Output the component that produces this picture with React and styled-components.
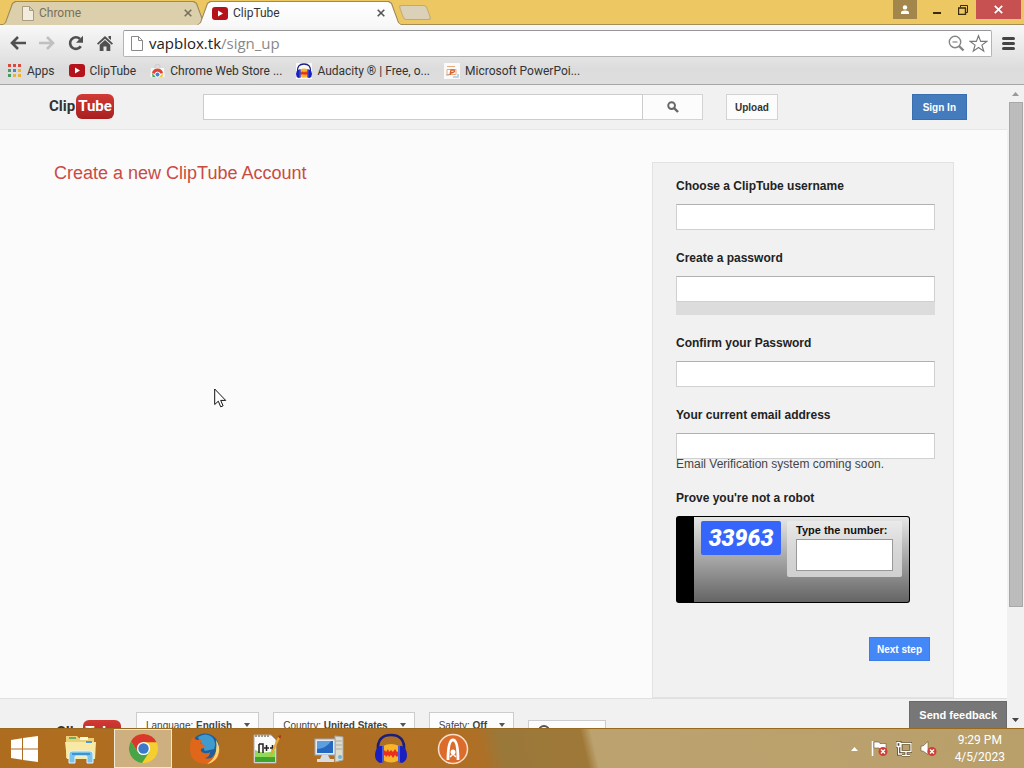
import React from "react";
import styled, { createGlobalStyle, css } from "styled-components";

const uiFont = `Roboto, "Open Sans", sans-serif`;
const pageFont = `"Liberation Sans", Arial, sans-serif`;

const GlobalStyle = createGlobalStyle`
  * {
    box-sizing: border-box;
  }
  body {
    margin: 0;
    font-family: ${pageFont};
    font-size: 12px;
    color: #333;
  }
  button, input {
    font-family: inherit;
    margin: 0;
  }
  svg {
    display: block;
    flex: none;
  }
`;

const Desktop = styled.div`
  display: flex;
  flex-direction: column;
  height: 100vh;
  overflow: hidden;
`;

/* ---------- browser window ---------- */

const TitleBar = styled.div`
  display: flex;
  flex: none;
  height: 25px;
  padding-left: 2px;
  background: #edc862;
  border-bottom: 1px solid #a38d58;
  font-family: ${uiFont};
`;

const Tabs = styled.div`
  display: flex;
  height: 25px;
  padding-top: 1px;
`;

const Tab = styled.div`
  position: relative;
  display: flex;
  align-items: center;
  width: 205px;
  margin-right: -10px;
  padding: 0 15px 0 20px;
  background: #9c8a5e;
  clip-path: polygon(0 100%, 3px 90%, 10px 8%, 13px 0, 192px 0, 195px 8%, 202px 90%, 100% 100%);
  color: #77705e;
  z-index: ${(props) => (props.$active ? 1 : 0)};

  &::before {
    content: "";
    position: absolute;
    inset: 1px 1px 0 1px;
    background: ${(props) => (props.$active ? "linear-gradient(#ffffff, #f8f8f8)" : "#dccfac")};
    clip-path: polygon(0 100%, 3px 90%, 10px 8%, 13px 0, 190px 0, 193px 8%, 200px 90%, 100% 100%);
  }

  > * {
    position: relative;
  }

  ${(props) =>
    props.$active &&
    css`
      padding: 0 17px 0 15px;
      color: #333;
    `}
`;

const TabTitle = styled.span`
  flex: 1;
  margin-left: 5px;
  font-size: 12px;
  line-height: 16px;
`;

const IconButton = styled.button`
  display: flex;
  align-items: center;
  justify-content: center;
  padding: 0;
  border: 0;
  background: none;
  color: inherit;
`;

const NewTab = styled(IconButton)`
  width: 28px;
  height: 15px;
  margin: 5px 0 0 9px;
  border: 1px solid #c0aa70;
  border-radius: 3px;
  background: #dad1b8;
  transform: skewX(20deg);
`;

const WindowControls = styled.div`
  display: flex;
  margin-left: auto;
  padding-right: 3px;
`;

const UserButton = styled(IconButton)`
  width: 24px;
  height: 19px;
  margin-right: 7px;
  background: #a3864b;
`;

const WindowButton = styled(IconButton)`
  width: 26px;
  height: 20px;
`;

const CloseWindow = styled(IconButton)`
  width: 45px;
  height: 19px;
  background: #c75050;
`;

const Toolbar = styled.div`
  flex: none;
  height: 60px;
  background: linear-gradient(#f8f8f8, #dcdcdc 75%, #dedede);
  border-bottom: 1px solid #a6a6a6;
  font-family: ${uiFont};
`;

const NavRow = styled.div`
  display: flex;
  align-items: center;
  height: 32px;
  padding: 4px 9px 0 3px;
`;

const NavButton = styled(IconButton)`
  width: 29px;
  height: 24px;
`;

const Omnibox = styled.div`
  display: flex;
  flex: 1;
  align-items: center;
  gap: 4px;
  height: 27px;
  margin: 0 10px 0 4px;
  padding: 0 3px 0 7px;
  border: 1px solid #b4b4b4;
  border-top-color: #969696;
  border-radius: 2px;
  background: #fff;
`;

const Address = styled.div`
  flex: 1;
  margin-left: 2px;
  font-family: "Open Sans", "Noto Sans", sans-serif;
  font-size: 15px;
  line-height: 20px;
  color: #888;

  b {
    font-weight: 400;
    color: #222;
  }
`;

const BookmarkBar = styled.nav`
  display: flex;
  gap: 14px;
  height: 27px;
  padding-left: 8px;
`;

const Bookmark = styled.a`
  display: flex;
  align-items: center;
  gap: 5px;
  color: #333;
  font-size: 12px;
  text-decoration: none;
  white-space: nowrap;
`;

/* ---------- page ---------- */

const Viewport = styled.div`
  display: flex;
  flex: 1;
  min-height: 0;
  background: #fbfbfb;
`;

const Page = styled.div`
  position: relative;
  flex: 1;
  overflow: hidden;
`;

const Header = styled.header`
  display: flex;
  align-items: flex-start;
  height: 45px;
  padding: 9px 40px 0 49px;
  background: #f1f1f1;
  border-bottom: 1px solid #e6e6e6;
`;

const LogoLink = styled.a`
  display: flex;
  flex: none;
  align-items: center;
  justify-content: space-between;
  width: 65px;
  color: #333;
  font: 700 15px/25px Roboto, "Liberation Sans", sans-serif;
  text-decoration: none;

  span {
    width: 38px;
    border-radius: 6px;
    background: linear-gradient(#d23a35, #a81f20);
    color: #fff;
    text-align: center;
  }
`;

const Search = styled.form`
  display: flex;
  flex: 0 1 500px;
  height: 26px;
  margin-left: 89px;
`;

const SearchInput = styled.input`
  flex: 1;
  min-width: 0;
  border: 1px solid #ccc;
  background: #fff;
`;

const PlainButton = styled.button`
  height: 26px;
  padding: 0 8px;
  border: 1px solid #d3d3d3;
  background: #fcfcfc;
  color: #333;
  font-size: 10px;
  font-weight: 700;
`;

const SearchButton = styled(PlainButton)`
  display: flex;
  align-items: center;
  justify-content: center;
  width: 60px;
  border-left: 0;
`;

const UploadButton = styled(PlainButton)`
  margin-left: 23px;
`;

const SignInButton = styled(PlainButton)`
  margin-left: auto;
  padding: 0 10px;
  border-color: #3b6eb0;
  background: #447bbd;
  color: #fff;
`;

const Main = styled.main`
  display: flex;
  align-items: flex-start;
  justify-content: space-between;
  padding: 32px 53px 0 54px;
`;

const Heading = styled.h1`
  margin: 0;
  color: #ca4a42;
  font-size: 18px;
  font-weight: 400;
  line-height: 22px;
`;

const SignUpForm = styled.form`
  flex: none;
  width: 302px;
  padding: 15px 18px 36px 23px;
  border: 1px solid #e2e2e2;
  background: #f1f1f1;
`;

const Field = styled.div`
  display: flex;
  flex-direction: column;
  margin-bottom: 20px;
`;

const Label = styled.label`
  margin-bottom: 10px;
  color: #222;
  font-weight: 700;
  line-height: 16px;
`;

const TextInput = styled.input`
  height: 26px;
  padding: 0 8px;
  border: 1px solid #d0d0d0;
  border-top-color: #b0b0b0;
  background: #fff;
`;

const StrengthBar = styled.div`
  height: 13px;
  background: #dcdcdc;
`;

const Hint = styled.p`
  margin: 0;
  color: #444;
  line-height: 11px;
`;

const Captcha = styled.div`
  display: flex;
  align-items: flex-start;
  gap: 6px;
  width: 234px;
  height: 87px;
  padding: 4px 7px;
  border: 1px solid #000;
  border-left-width: 18px;
  border-radius: 3px;
  background: linear-gradient(#e6e6e6, #646464);
`;

const CaptchaCode = styled.div`
  width: 80px;
  height: 34px;
  border-radius: 2px;
  background: #3565fb;
  color: #fff;
  font: italic 900 23px/35px Roboto, "Liberation Sans", sans-serif;
  text-align: center;
`;

const CaptchaAnswer = styled.div`
  display: flex;
  flex: 1;
  flex-direction: column;
  height: 56px;
  padding: 2px 9px 6px;
  border-radius: 2px;
  background: linear-gradient(rgba(255, 255, 255, 0.35), rgba(255, 255, 255, 0.6));
`;

const CaptchaLabel = styled.label`
  color: #111;
  font-size: 11px;
  font-weight: 700;
  line-height: 15px;
  white-space: nowrap;
`;

const CaptchaInput = styled(TextInput)`
  width: 97px;
  height: 32px;
  margin-top: 1px;
  border-color: #999;
`;

const FormActions = styled.div`
  display: flex;
  justify-content: flex-end;
  padding: 14px 5px 0 0;
`;

const SubmitButton = styled(PlainButton)`
  height: 24px;
  padding: 0 7px;
  border-color: #3b7de8;
  background: #4488f8;
  color: #fff;
`;

const Footer = styled.footer`
  display: flex;
  align-items: flex-start;
  padding: 13px 56px 40px;
  border-top: 1px solid #e0e0e0;
  background: #f1f1f1;

  ${LogoLink} {
    padding-top: 8px;
  }
`;

const FooterButtons = styled.div`
  display: flex;
  align-items: flex-end;
  gap: 14px;
  margin-left: 15px;
`;

const Picker = styled.button`
  display: flex;
  align-items: center;
  gap: 12px;
  height: 28px;
  padding: 0 8px 2px 9px;
  border: 1px solid #ccc;
  background: #fcfcfc;
  color: #444;
  font-size: 10px;
  white-space: nowrap;
`;

const HistoryButton = styled(Picker)`
  width: 78px;
  height: 20px;
`;

const Caret = styled.i`
  border: 3px solid transparent;
  border-top: 4px solid #555;
  border-bottom: 0;
`;

const Feedback = styled.button`
  position: absolute;
  right: 0;
  bottom: 0;
  height: 27px;
  padding: 0 9px;
  border: 1px solid #6a6a6a;
  border-bottom: 0;
  background: #777;
  color: #fff;
  font-size: 11px;
  font-weight: 700;
`;

const Scrollbar = styled.div`
  display: flex;
  flex: none;
  flex-direction: column;
  align-items: center;
  width: 17px;
  background: #f1f1f1;
`;

const ScrollArrow = styled(IconButton)`
  flex: none;
  width: 17px;
  height: 17px;
`;

const Track = styled.div`
  flex: 1;
  width: 14px;
`;

const Thumb = styled.div`
  height: 83%;
  border: 1px solid #a8a8a8;
  background: #bcbcbc;
`;

/* ---------- taskbar ---------- */

const Taskbar = styled.div`
  display: flex;
  flex: none;
  height: 40px;
  border-top: 1px solid #98691f;
  background: linear-gradient(77deg, #ae6d1e, #ae7026 47%, #9a783a 49%, #9f7838 57%, #bba26e 58%, #b9a06b);
  font-family: ${uiFont};
`;

const StartButton = styled(IconButton)`
  width: 48px;
  margin-right: 2px;
`;

const TaskButton = styled(IconButton)`
  width: 58px;
  margin: 0 2px;
  border: 1px solid ${(props) => (props.$active ? "#f3e8d3" : "transparent")};
  background: ${(props) => (props.$active ? "#cdaf80" : "none")};
`;

const Tray = styled.div`
  display: flex;
  align-items: center;
  gap: 8px;
  margin-left: auto;
  padding-right: 19px;
`;

const HiddenIcons = styled(IconButton)`
  margin-right: 5px;
`;

const Clock = styled.time`
  margin-left: 10px;
  color: #fff;
  font-size: 12px;
  line-height: 17px;
  text-align: center;
`;

const Pointer = styled.svg`
  position: absolute;
  left: 214px;
  top: 303px;
`;

/* ---------- icons ---------- */

const FileIcon = ({ stroke = "#888" }) => (
  <svg width="12" height="15" viewBox="0 0 12 15" fill="#fff" fillOpacity="0.6" stroke={stroke}>
    <path d="M.5.5h7l4 4v10H.5zM7.5.5v4h4" />
  </svg>
);

const PlayIcon = () => (
  <svg width="16" height="13" viewBox="0 0 16 13">
    <rect y="0" width="16" height="13" rx="3" fill="#b5131b" />
    <path d="M6 3.5v6l5-3z" fill="#fff" />
  </svg>
);

const CrossIcon = ({ size = 8, stroke = "#555", width = 1.6 }) => (
  <svg width={size} height={size} viewBox="0 0 8 8" stroke={stroke} strokeWidth={width}>
    <path d="M.7.7l6.6 6.6M7.3.7L.7 7.3" />
  </svg>
);

const ArrowIcon = ({ color, flip }) => (
  <svg width="16" height="14" viewBox="0 0 16 14" fill="none" stroke={color} strokeWidth="2.6">
    <path d={flip ? "M0 7h14M8 1l6 6-6 6" : "M16 7H2M8 1L2 7l6 6"} />
  </svg>
);

const ReloadIcon = () => (
  <svg width="16" height="16" viewBox="0 0 16 16">
    <path d="M12.8 11.2A5.8 5.8 0 1 1 12 4" fill="none" stroke="#505050" strokeWidth="2.6" />
    <path d="M15 .8v7H8z" fill="#505050" />
  </svg>
);

const HomeIcon = () => (
  <svg width="16" height="15" viewBox="0 0 16 15" fill="#505050">
    <path d="M8 0l8 7.5-1.2 1.3L8 2.7 1.2 8.8 0 7.5zM11.5 0H14v4l-2.5-2z" />
    <path d="M8 4l5.3 4.8V15H9.5v-4.5h-3V15H2.7V8.8z" />
  </svg>
);

const ZoomIcon = () => (
  <svg width="17" height="17" viewBox="0 0 17 17" fill="none" stroke="#858585">
    <circle cx="7" cy="7" r="5.7" strokeWidth="1.4" />
    <path d="M4.5 7h5" strokeWidth="1.2" />
    <path d="M11 11l4.500 4.500" strokeWidth="2.4" />
  </svg>
);

const StarIcon = () => (
  <svg width="19" height="19" viewBox="0 0 20 19" fill="#fff" stroke="#777" strokeWidth="1.2">
    <path d="M10 1.300l2.300 6h6.400l-5.100 3.900 1.900 6.300-5.500-3.800-5.500 3.800 1.900-6.300-5.100-3.900h6.400z" />
  </svg>
);

const MenuIcon = () => (
  <svg width="13" height="13" viewBox="0 0 13 13" stroke="#444" strokeWidth="3" strokeLinecap="round">
    <path d="M1.500 1.500h10M1.500 6.500h10M1.500 11.500h10" />
  </svg>
);

const AppsIcon = () => {
  const colors = ["#d84a3f", "#d84a3f", "#d84a3f", "#4b9b5f", "#4a82d8", "#e8b33b", "#4b9b5f", "#e8b33b", "#e8b33b"];
  return (
    <svg width="14" height="14" viewBox="0 0 14 14">
      {colors.map((color, i) => (
        <rect key={i} x={(i % 3) * 5} y={Math.floor(i / 3) * 5} width="3" height="3" fill={color} />
      ))}
    </svg>
  );
};

const StoreIcon = () => (
  <svg width="15" height="16" viewBox="0 0 15 16">
    <path d="M5 5V3q0-1.500 2.500-1.500T10 3v2" fill="none" stroke="#ccc" />
    <path d="M1 5h13l.7 9H.3z" fill="#f7f7f7" />
    <path d="M2 10a5.600 5.600 0 0 1 11 0l-4 1H5z" fill="#dc4638" />
    <path d="M2 10l4 4H2.500z" fill="#4aa45c" />
    <path d="M13 10l-4 4h3.500z" fill="#f2c63f" />
    <circle cx="7.5" cy="11.6" r="2.5" fill="#4a83d4" stroke="#fff" />
  </svg>
);

const AudacityIcon = ({ size = 16 }) => (
  <svg width={size} height={size} viewBox="0 0 32 32">
    {size < 20 && <rect width="32" height="32" fill="#f8f8f8" />}
    <path d="M8 13q8-4 16 0v14q-8 5-16 0z" fill="#f9b52a" />
    <path d="M8 19l2-2 1 2 2-3 1 3 2-2 2 2 2-3 2 3 2-1v4l-2 2-2-2-2 3-2-3-2 2-1-2-2 2-1-2-2 1z" fill="#e8301c" />
    <path d="M3 18C2 7 7 2 16 2s14 5 13 16" fill="none" stroke="#1c1e7c" strokeWidth="2.600" />
    <path d="M5 13q-5 3-5 9t5 8l4-1V13zM27 13q5 3 5 9t-5 8l-4-1V13z" fill="#1a20c0" />
    <path d="M8 13v16M24 13v16" stroke="#4c5ee0" strokeWidth="2" />
  </svg>
);

const SlidesIcon = () => (
  <svg width="16" height="16" viewBox="0 0 16 16" fill="none">
    <rect width="16" height="16" fill="#fafafa" />
    <path d="M3 3.500h8M3 6.500h9v5H3z" stroke="#e8ab80" />
    <path d="M6 12l1-5h3q2 2-3 3" stroke="#d2622e" strokeWidth="1.300" />
    <path d="M9 14h5v-3" stroke="#a9cbe2" strokeWidth="1.500" />
    <path d="M2 12h3" stroke="#aaa" />
  </svg>
);

const SearchIcon = () => (
  <svg width="12" height="12" viewBox="0 0 12 12" fill="none" stroke="#666">
    <circle cx="4.600" cy="4.600" r="3.400" strokeWidth="1.900" />
    <path d="M7 7l4 4" strokeWidth="2.400" />
  </svg>
);

const UserIcon = () => (
  <svg width="10" height="9" viewBox="0 0 10 9" fill="#fff">
    <circle cx="5" cy="2.400" r="2.200" />
    <path d="M1 9V7.500Q1 5.500 5 5.500t4 2V9z" />
  </svg>
);

const MinimizeIcon = () => (
  <svg width="8" height="12" viewBox="0 0 8 12">
    <path d="M0 8h8v2H0z" fill="#3a2a10" />
  </svg>
);

const RestoreIcon = () => (
  <svg width="10" height="10" viewBox="0 0 10 10" fill="none" stroke="#3a2a10">
    <path d="M2.500 2.500v-2h7v7h-2" />
    <path d="M0 3h8M.5 3v6.500h7V3" strokeWidth="1.400" />
  </svg>
);

const Triangle = ({ up, color }) => (
  <svg width="7" height="4" viewBox="0 0 7 4" fill={color}>
    <path d={up ? "M0 4h7L3.500 0z" : "M0 0h7L3.500 4z"} />
  </svg>
);

const WindowsIcon = () => (
  <svg width="27" height="26" viewBox="0 0 27 26" fill="#fff">
    <path d="M0 4l11-1.700v10.200H0zM12 2.100L27 0v12.500H12zM0 13.500h11v10.200L0 22zM12 13.500h15V26l-15-2.100z" />
  </svg>
);

const ExplorerIcon = () => (
  <svg width="32" height="32" viewBox="0 0 32 32">
    <path d="M1 3h11l2 2h15v20H1z" fill="#ecd078" />
    <path d="M4 4h7v2H4z" fill="#62b06c" />
    <path d="M15 4h8v3h-8z" fill="#fff8d8" />
    <path d="M0 9h31l-1 17H2z" fill="#f8e9a4" />
    <path d="M21 8h6v2h-6z" fill="#4e9ad2" />
    <path d="M4 21q0-3 3-3h18q3 0 3 3v9h-6v-6q0-1-1-1H11q-1 0-1 1v6H4z" fill="#7cc3ec" stroke="#e4f5fd" />
    <path d="M7 21h18" stroke="#3a95cf" strokeWidth="2" />
  </svg>
);

const ChromeIcon = () => (
  <svg width="29" height="29" viewBox="0 0 30 30">
    <circle cx="15" cy="15" r="15" fill="#f5cf2e" />
    <path d="M2 7.500A15 15 0 0 1 28.400 8.500H15L9 18.500z" fill="#d8392c" />
    <path d="M2 7.500A15 15 0 0 0 13.500 30L21 18.500 9 18.500z" fill="#47a548" />
    <circle cx="15" cy="15" r="6.800" fill="#fff" />
    <circle cx="15" cy="15" r="5.400" fill="#3c79c9" />
  </svg>
);

const FirefoxIcon = () => (
  <svg width="30" height="31" viewBox="0 0 30 31">
    <circle cx="15" cy="14.500" r="14" fill="#1f5f9c" />
    <path d="M8 4q8-5 14 0 5 5 2 12l-9 2z" fill="#3f9ad0" />
    <path d="M1 7q2-2 3-4 0 3 3 4 3-1 5 0-2 2-1 4 3 0 4 2-1 2-4 3-1 3 3 4 4 1 6-1 0 5-5 6 6 2 9-3 4-5 3-12 4 5 2 12-3 9-14 9Q1 30 0 17 0 11 1 7z" fill="#e0661a" />
    <path d="M26 7q4 6 3 12-2 10-12 12 8-5 9-13 1-6 0-11z" fill="#f8d673" />
  </svg>
);

const NotepadIcon = () => (
  <svg width="30" height="32" viewBox="0 0 30 32">
    <path d="M2 2h17l5 5v23H2z" fill="#fafafa" stroke="#aaa" />
    <path d="M3 17q10 5 20 0v12H3z" fill="#8edb55" />
    <path d="M3 24h20v5H3z" fill="#3da52a" />
    <path d="M3 3h15" stroke="#999" strokeDasharray="2 1" strokeWidth="2" />
    <path d="M7 20v-9M7 11h4v9M12 15h5M14.500 12v6M18 15h5M20.500 12v6" fill="none" stroke="#222" strokeWidth="1.500" />
    <path d="M18 25l1-6 7-15 2 1-7 15z" fill="#e6a936" />
    <path d="M26 3l3-1v2l-1 2z" fill="#a63a1e" />
  </svg>
);

const ComputerIcon = () => (
  <svg width="31" height="28" viewBox="0 0 31 28">
    <path d="M21 1l8 1v23l-8 2z" fill="#dcdccc" stroke="#aaa" />
    <path d="M22 6h6M22 10h6M22 14h6" stroke="#aaa" />
    <rect x="1" y="4" width="20" height="16" fill="#e6eaf0" stroke="#9aa8b8" />
    <rect x="3" y="6" width="16" height="12" fill="#2468c0" />
    <path d="M3 6h14q-4 7-14 8z" fill="#5c9fe0" />
    <path d="M8 20h6l2 4H6zM3 24h17v3H3z" fill="#d9dde2" />
    <circle cx="26" cy="22" r="2" fill="#69b4dc" />
  </svg>
);

const AvastIcon = () => (
  <svg width="32" height="32" viewBox="0 0 32 32" fill="none">
    <circle cx="16" cy="16" r="14.500" fill="#dc6c2c" stroke="#f7dfcb" strokeWidth="1.500" />
    <path d="M11 27q0-20 5-20t5 20" stroke="#fff" strokeWidth="2.800" />
    <path d="M13 24l3-3 3 3" stroke="#fff" strokeWidth="1.500" />
    <circle cx="16" cy="19" r="2.500" fill="#fff" />
  </svg>
);

const ErrorBadge = () => (
  <g>
    <circle cx="12" cy="11.500" r="4.500" fill="#cf3f38" />
    <path d="M10 9.500l4 4M14 9.500l-4 4" stroke="#fff" strokeWidth="1.400" />
  </g>
);

const FlagIcon = () => (
  <svg width="17" height="17" viewBox="0 0 17 17">
    <path d="M1.500 1v15" stroke="#fff" strokeWidth="1.500" />
    <path d="M3 2h5l1 1.500h6V9H9L8 8H3z" fill="#fff" stroke="#6b542b" strokeWidth=".6" />
    <ErrorBadge />
  </svg>
);

const NetworkIcon = () => (
  <svg width="16" height="16" viewBox="0 0 16 16" fill="none">
    <path d="M5 2.500h10v8H5zM10 11v3M6 14.500h8M1 1.500h3v4H1zM2.500 6v7H6" stroke="#5a4620" strokeWidth="3" />
    <path d="M5 2.500h10v8H5zM10 11v3M6 14.500h8M1 1.500h3v4H1zM2.500 6v7H6" stroke="#fff" strokeWidth="1.300" />
  </svg>
);

const VolumeIcon = () => (
  <svg width="17" height="17" viewBox="0 0 17 17">
    <path d="M1 6h2l5-4.500v13L3 11H1z" fill="#fff" stroke="#6b542b" strokeWidth=".6" />
    <ErrorBadge />
  </svg>
);

/* ---------- data ---------- */

const bookmarks = [
  { label: "Apps", icon: <AppsIcon /> },
  { label: "ClipTube", icon: <PlayIcon /> },
  { label: "Chrome Web Store ...", icon: <StoreIcon /> },
  { label: "Audacity ® | Free, o...", icon: <AudacityIcon /> },
  { label: "Microsoft PowerPoi...", icon: <SlidesIcon /> },
];

const pickers = [
  { name: "Language:", value: "English" },
  { name: "Country:", value: "United States" },
  { name: "Safety:", value: "Off" },
];

const tasks = [
  { name: "File Explorer", icon: <ExplorerIcon /> },
  { name: "Google Chrome", icon: <ChromeIcon />, active: true },
  { name: "Firefox", icon: <FirefoxIcon /> },
  { name: "Notepad++", icon: <NotepadIcon /> },
  { name: "Computer", icon: <ComputerIcon /> },
  { name: "Audacity", icon: <AudacityIcon size={32} /> },
  { name: "Avast", icon: <AvastIcon /> },
];

const Logo = () => (
  <LogoLink href="#">
    Clip<span>Tube</span>
  </LogoLink>
);

const Browser = () => (
  <>
    <TitleBar>
      <Tabs>
        <Tab>
          <FileIcon stroke="#a89d80" />
          <TabTitle>Chrome</TabTitle>
          <IconButton aria-label="Close tab">
            <CrossIcon stroke="#77705e" />
          </IconButton>
        </Tab>
        <Tab $active>
          <PlayIcon />
          <TabTitle>ClipTube</TabTitle>
          <IconButton aria-label="Close tab">
            <CrossIcon />
          </IconButton>
        </Tab>
      </Tabs>
      <NewTab aria-label="New tab" />
      <WindowControls>
        <UserButton aria-label="User"><UserIcon /></UserButton>
        <WindowButton aria-label="Minimize"><MinimizeIcon /></WindowButton>
        <WindowButton aria-label="Restore"><RestoreIcon /></WindowButton>
        <CloseWindow aria-label="Close"><CrossIcon size={9} stroke="#fff" width={1.5} /></CloseWindow>
      </WindowControls>
    </TitleBar>
    <Toolbar>
      <NavRow>
        <NavButton aria-label="Back"><ArrowIcon color="#505050" /></NavButton>
        <NavButton aria-label="Forward"><ArrowIcon color="#c0c0c0" flip /></NavButton>
        <NavButton aria-label="Reload"><ReloadIcon /></NavButton>
        <NavButton aria-label="Home"><HomeIcon /></NavButton>
        <Omnibox>
          <FileIcon />
          <Address><b>vapblox.tk</b>/sign_up</Address>
          <IconButton aria-label="Zoom"><ZoomIcon /></IconButton>
          <IconButton aria-label="Bookmark this page"><StarIcon /></IconButton>
        </Omnibox>
        <IconButton aria-label="Menu"><MenuIcon /></IconButton>
      </NavRow>
      <BookmarkBar>
        {bookmarks.map((bookmark) => (
          <Bookmark key={bookmark.label} href="#">
            {bookmark.icon}
            {bookmark.label}
          </Bookmark>
        ))}
      </BookmarkBar>
    </Toolbar>
  </>
);

const SignUp = () => (
  <SignUpForm>
    <Field>
      <Label htmlFor="username">Choose a ClipTube username</Label>
      <TextInput id="username" type="text" />
    </Field>
    <Field>
      <Label htmlFor="password">Create a password</Label>
      <TextInput id="password" type="password" />
      <StrengthBar />
    </Field>
    <Field>
      <Label htmlFor="confirm">Confirm your Password</Label>
      <TextInput id="confirm" type="password" />
    </Field>
    <Field>
      <Label htmlFor="email">Your current email address</Label>
      <TextInput id="email" type="email" />
      <Hint>Email Verification system coming soon.</Hint>
    </Field>
    <Field>
      <Label as="span">Prove you're not a robot</Label>
      <Captcha>
        <CaptchaCode>33963</CaptchaCode>
        <CaptchaAnswer>
          <CaptchaLabel htmlFor="captcha">Type the number:</CaptchaLabel>
          <CaptchaInput id="captcha" type="text" />
        </CaptchaAnswer>
      </Captcha>
    </Field>
    <FormActions>
      <SubmitButton type="button">Next step</SubmitButton>
    </FormActions>
  </SignUpForm>
);

const App = () => {
  return (
    <Desktop>
      <GlobalStyle />
      <Browser />
      <Viewport>
        <Page>
          <Header>
            <Logo />
            <Search>
              <SearchInput type="text" aria-label="Search" />
              <SearchButton type="button" aria-label="Search"><SearchIcon /></SearchButton>
            </Search>
            <UploadButton>Upload</UploadButton>
            <SignInButton>Sign In</SignInButton>
          </Header>
          <Main>
            <Heading>Create a new ClipTube Account</Heading>
            <SignUp />
          </Main>
          <Footer>
            <Logo />
            <FooterButtons>
              {pickers.map((picker) => (
                <Picker key={picker.name}>
                  <span>
                    {picker.name} <b>{picker.value}</b>
                  </span>
                  <Caret />
                </Picker>
              ))}
              <HistoryButton aria-label="History">
                <svg width="12" height="8" viewBox="0 0 12 8">
                  <circle cx="6" cy="6" r="5" fill="none" stroke="#555" strokeWidth="2" />
                </svg>
              </HistoryButton>
            </FooterButtons>
          </Footer>
          <Feedback>Send feedback</Feedback>
          <Pointer width="13" height="20" viewBox="0 0 13 20">
            <path d="M.7 1v15.500l3.600-3.300 2.400 5.600 2.400-1-2.400-5.400h5z" fill="#fff" stroke="#111" />
          </Pointer>
        </Page>
        <Scrollbar>
          <ScrollArrow aria-label="Scroll up"><Triangle up color="#999" /></ScrollArrow>
          <Track>
            <Thumb />
          </Track>
          <ScrollArrow aria-label="Scroll down"><Triangle color="#444" /></ScrollArrow>
        </Scrollbar>
      </Viewport>
      <Taskbar>
        <StartButton aria-label="Start"><WindowsIcon /></StartButton>
        {tasks.map((task) => (
          <TaskButton key={task.name} aria-label={task.name} $active={task.active}>
            {task.icon}
          </TaskButton>
        ))}
        <Tray>
          <HiddenIcons aria-label="Show hidden icons"><Triangle up color="#fff" /></HiddenIcons>
          <FlagIcon />
          <NetworkIcon />
          <VolumeIcon />
          <Clock>
            9:29 PM
            <br />
            4/5/2023
          </Clock>
        </Tray>
      </Taskbar>
    </Desktop>
  );
};

export default App;
